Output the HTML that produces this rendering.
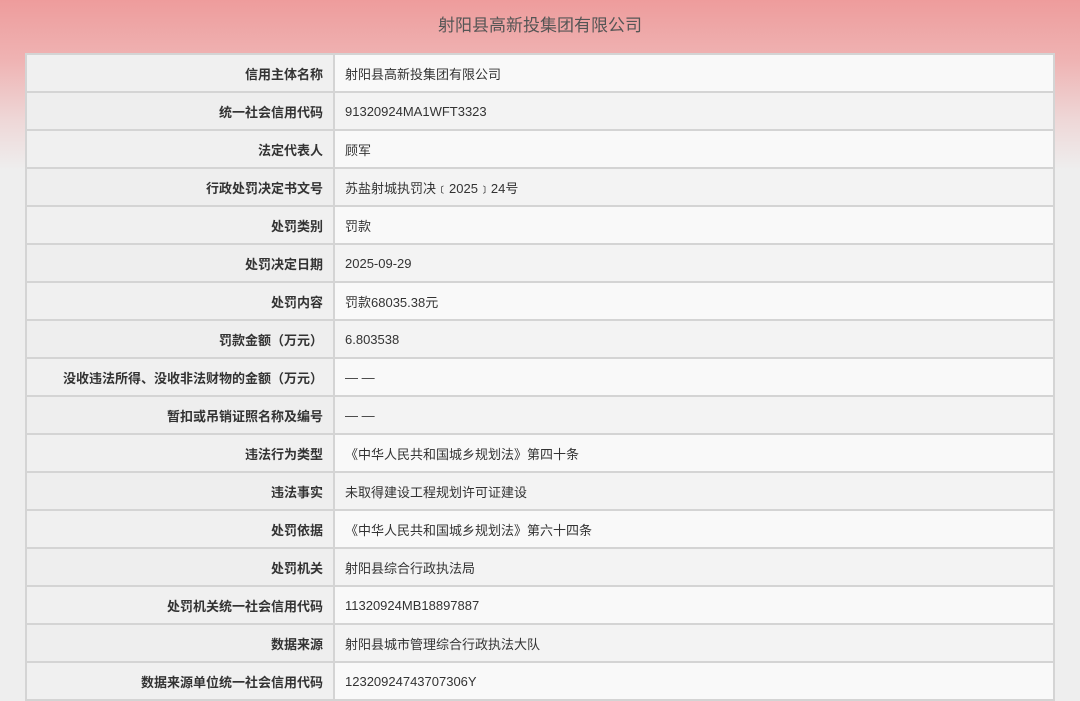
<!DOCTYPE html>
<html><head><meta charset="utf-8"><style>
html,body{margin:0;padding:0}
body{width:1080px;height:701px;overflow:hidden;background:linear-gradient(to bottom,#ee9c9c 0px,#efb3b3 60px,#eed7d7 120px,#eeeeee 170px,#eeeeee 100%);font-family:"Liberation Sans","Noto Sans CJK SC",sans-serif;position:relative}
.title{position:absolute;top:0;left:0;width:1080px;height:52px;line-height:52px;text-align:center;font-size:17px;color:#555}
table{position:absolute;left:25px;top:53px;width:1030px;border-collapse:collapse}
td{height:36px;border:2px solid #d4d4d4;font-size:13px;color:#333;padding:0}
td.l{width:296px;text-align:right;padding-right:10px;font-weight:bold;background:#f0f0f0}
td.v{padding-left:10px;background:#f9f9f9}
tr:nth-child(even) td.v{background:#f3f3f3}
tr:nth-child(even) td.l{background:#eeeeee}
</style></head><body>
<div class="title">射阳县高新投集团有限公司</div>
<table>
<tr><td class="l">信用主体名称</td><td class="v">射阳县高新投集团有限公司</td></tr>
<tr><td class="l">统一社会信用代码</td><td class="v">91320924MA1WFT3323</td></tr>
<tr><td class="l">法定代表人</td><td class="v">顾军</td></tr>
<tr><td class="l">行政处罚决定书文号</td><td class="v">苏盐射城执罚决﹝2025﹞24号</td></tr>
<tr><td class="l">处罚类别</td><td class="v">罚款</td></tr>
<tr><td class="l">处罚决定日期</td><td class="v">2025-09-29</td></tr>
<tr><td class="l">处罚内容</td><td class="v">罚款68035.38元</td></tr>
<tr><td class="l">罚款金额（万元）</td><td class="v">6.803538</td></tr>
<tr><td class="l">没收违法所得、没收非法财物的金额（万元）</td><td class="v">— —</td></tr>
<tr><td class="l">暂扣或吊销证照名称及编号</td><td class="v">— —</td></tr>
<tr><td class="l">违法行为类型</td><td class="v">《中华人民共和国城乡规划法》第四十条</td></tr>
<tr><td class="l">违法事实</td><td class="v">未取得建设工程规划许可证建设</td></tr>
<tr><td class="l">处罚依据</td><td class="v">《中华人民共和国城乡规划法》第六十四条</td></tr>
<tr><td class="l">处罚机关</td><td class="v">射阳县综合行政执法局</td></tr>
<tr><td class="l">处罚机关统一社会信用代码</td><td class="v">11320924MB18897887</td></tr>
<tr><td class="l">数据来源</td><td class="v">射阳县城市管理综合行政执法大队</td></tr>
<tr><td class="l">数据来源单位统一社会信用代码</td><td class="v">12320924743707306Y</td></tr>
</table>
</body></html>
